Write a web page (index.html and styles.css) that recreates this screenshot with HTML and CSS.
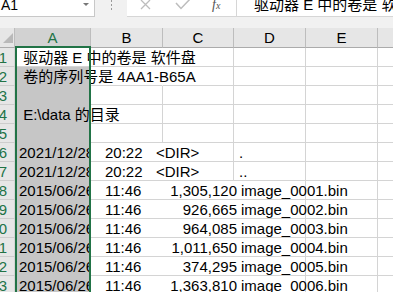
FILE: index.html
```html
<!DOCTYPE html>
<html lang="zh-CN">
<head>
  <meta charset="UTF-8" />
  <meta name="viewport" content="width=device-width, initial-scale=1.0"/>
  <title>目录列表</title>
  <link rel="stylesheet" href="styles.css">
</head>
<body>
  <!-- 名称框 + 编辑栏 -->
  <div class="topbar">
    <div class="namebox">
      <span class="ref">A1</span>
      <span class="drop"></span>
    </div>
    <div class="grip">
      <svg width="3" height="12" viewBox="0 0 3 12"><rect x="1" y="0" width="1" height="2" fill="#9a9a9a"/><rect x="1" y="4" width="1" height="2" fill="#9a9a9a"/><rect x="1" y="8" width="1" height="2" fill="#9a9a9a"/></svg>
    </div>
    <div class="fbar">
      <div class="btns">
        <svg class="ic-x" width="11" height="10" viewBox="0 0 11 10"><path d="M1 0 L10 9 M10 0 L1 9" stroke="#bdbdbd" stroke-width="1.3" fill="none"/></svg>
        <svg class="ic-ok" width="17" height="11" viewBox="0 0 17 11"><path d="M1 4 L6 9.5 L16 -1" stroke="#bdbdbd" stroke-width="1.5" fill="none"/></svg>
        <span class="fx">f<small>x</small></span>
      </div>
      <div class="ftext">驱动器 E 中的卷是 软件盘</div>
    </div>
  </div>
  <div class="band"></div>

  <div class="sheet">
    <div class="row head">
      <div class="c rh corner">
        <svg width="10" height="10" viewBox="0 0 10 10"><path d="M10 0 L10 10 L0 10 Z" fill="#b9b9b9"/></svg>
      </div>
      <div class="c ca on">A</div>
      <div class="c cb">B</div>
      <div class="c cc">C</div>
      <div class="c cd">D</div>
      <div class="c ce">E</div>
      <div class="c cf"></div>
    </div>

    <div class="row">
      <div class="c rh"><span>1</span></div>
      <div class="c ca"> 驱动器 E 中的卷是 软件盘</div>
      <div class="c cb ov"></div><div class="c cc"></div><div class="c cd"></div><div class="c ce"></div><div class="c cf"></div>
    </div>
    <div class="row">
      <div class="c rh"><span>2</span></div>
      <div class="c ca sel"> 卷的序列号是 4AA1-B65A</div>
      <div class="c cb ov"></div><div class="c cc"></div><div class="c cd"></div><div class="c ce"></div><div class="c cf"></div>
    </div>
    <div class="row">
      <div class="c rh"><span>3</span></div>
      <div class="c ca sel"></div>
      <div class="c cb"></div><div class="c cc"></div><div class="c cd"></div><div class="c ce"></div><div class="c cf"></div>
    </div>
    <div class="row">
      <div class="c rh"><span>4</span></div>
      <div class="c ca sel"> E:\data 的目录</div>
      <div class="c cb"></div><div class="c cc"></div><div class="c cd"></div><div class="c ce"></div><div class="c cf"></div>
    </div>
    <div class="row">
      <div class="c rh"><span>5</span></div>
      <div class="c ca sel"></div>
      <div class="c cb"></div><div class="c cc"></div><div class="c cd"></div><div class="c ce"></div><div class="c cf"></div>
    </div>

    <div class="row">
      <div class="c rh"><span>6</span></div>
      <div class="c ca sel clip">2021/12/28</div>
      <div class="c span2"><span class="tm">20:22</span><span class="sz dir">&lt;DIR&gt;</span><span class="nm dot">.</span></div>
      <div class="c cd"></div><div class="c ce"></div><div class="c cf"></div>
    </div>
    <div class="row">
      <div class="c rh"><span>7</span></div>
      <div class="c ca sel clip">2021/12/28</div>
      <div class="c span2"><span class="tm">20:22</span><span class="sz dir">&lt;DIR&gt;</span><span class="nm dot">..</span></div>
      <div class="c cd"></div><div class="c ce"></div><div class="c cf"></div>
    </div>
    <div class="row">
      <div class="c rh"><span>8</span></div>
      <div class="c ca sel clip">2015/06/26</div>
      <div class="c span3"><span class="tm">11:46</span><span class="sz">1,305,120</span><span class="nm">image_0001.bin</span></div>
      <div class="c ce"></div><div class="c cf"></div>
    </div>
    <div class="row">
      <div class="c rh"><span>9</span></div>
      <div class="c ca sel clip">2015/06/26</div>
      <div class="c span3"><span class="tm">11:46</span><span class="sz">926,665</span><span class="nm">image_0002.bin</span></div>
      <div class="c ce"></div><div class="c cf"></div>
    </div>
    <div class="row">
      <div class="c rh"><span>10</span></div>
      <div class="c ca sel clip">2015/06/26</div>
      <div class="c span3"><span class="tm">11:46</span><span class="sz">964,085</span><span class="nm">image_0003.bin</span></div>
      <div class="c ce"></div><div class="c cf"></div>
    </div>
    <div class="row">
      <div class="c rh"><span>11</span></div>
      <div class="c ca sel clip">2015/06/26</div>
      <div class="c span3"><span class="tm">11:46</span><span class="sz">1,011,650</span><span class="nm">image_0004.bin</span></div>
      <div class="c ce"></div><div class="c cf"></div>
    </div>
    <div class="row">
      <div class="c rh"><span>12</span></div>
      <div class="c ca sel clip">2015/06/26</div>
      <div class="c span3"><span class="tm">11:46</span><span class="sz">374,295</span><span class="nm">image_0005.bin</span></div>
      <div class="c ce"></div><div class="c cf"></div>
    </div>
    <div class="row">
      <div class="c rh"><span>13</span></div>
      <div class="c ca sel clip">2015/06/26</div>
      <div class="c span3"><span class="tm">11:46</span><span class="sz">1,363,810</span><span class="nm">image_0006.bin</span></div>
      <div class="c ce"></div><div class="c cf"></div>
    </div>

    <!-- A 列选区边框 -->
    <div class="selection"></div>
  </div>
</body>
</html>
```

FILE: styles.css
```css
/* 页面 */
body {
  margin: 0;
  width: 393px;
  height: 292px;
  overflow: hidden;
  background: #fff;
  color: #000;
  font-family: "Liberation Sans", "Noto Sans CJK SC", sans-serif;
  font-size: 15px;
}

/* 名称框 / 编辑栏 */
.topbar {
  display: flex;
  height: 17px;
  background: #f1f1f1;
}

.namebox {
  flex: none;
  width: 95px;
  box-sizing: border-box;
  background: #fff;
  border-right: 1px solid #c8c8c8;
  border-bottom: 1px solid #c8c8c8;
  display: flex;
  justify-content: space-between;
  align-items: flex-start;
  padding: 0 5px 0 1px;
}

.namebox .ref {
  font-size: 14px;
  line-height: 12px;
  margin-top: -1px;
}

.drop {
  margin-top: 3px;
  border-left: 3.5px solid transparent;
  border-right: 3.5px solid transparent;
  border-top: 3px solid #777;
}

.grip {
  flex: none;
  width: 32px;
  display: flex;
  justify-content: center;
}

.fbar {
  flex: 1;
  min-width: 0;
  display: flex;
  background: #fff;
  border-bottom: 1px solid #d6d6d6;
}

.btns {
  width: 109px;
  flex: none;
  display: flex;
  align-items: flex-start;
  border-right: 1px solid #d6d6d6;
}

.ic-x { margin-left: 13px; }
.ic-ok { margin-left: 24px; margin-top: -1px; }

.fx {
  margin-left: 20px;
  margin-top: -3px;
  font-family: "Liberation Serif", serif;
  font-style: italic;
  font-size: 14px;
  color: #555;
}

.fx small { font-size: 10px; }

.ftext {
  flex: 1;
  min-width: 0;
  padding-left: 17px;
  white-space: nowrap;
  overflow: hidden;
  line-height: 12px;
  margin-top: -1px;
}

.band {
  height: 11px;
  background: #f1f1f1;
}

/* 表格 */
.sheet {
  position: relative;
}

.row {
  display: flex;
  height: 19px;
}

.c {
  flex: none;
  box-sizing: border-box;
  height: 19px;
  border-right: 1px solid #d4d4d4;
  border-bottom: 1px solid #d4d4d4;
  padding: 3px 0 0 2px;
  line-height: 14px;
  white-space: pre;
}

.rh { width: 15px; }
.ca { width: 76px; padding-left: 4px; }
.cb { width: 72px; }
.cc { width: 71px; }
.cd { width: 72px; }
.ce { width: 72px; }
.cf { width: 30px; }

/* 文字跨列显示的单元格 */
.span2 { width: 143px; }
.span3 { width: 215px; }

/* 文字溢出的单元格不画右边网格线 */
.ov { border-right-color: transparent; }

.clip { overflow: hidden; }

.sel { background: #c6c6c6; border-bottom-color: #c6c6c6; }

/* 行号 */
.rh {
  background: #e6e6e6;
  border-bottom-color: #cdcdcd;
  color: #217346;
  display: flex;
  justify-content: flex-end;
  overflow: hidden;
  padding: 3px 7px 0 0;
}

/* 列标题 */
.head {
  height: 20px;
}

.head .c {
  height: 20px;
  background: #e6e6e6;
  border-right-color: #bdbdbd;
  border-bottom-color: #ababab;
  text-align: center;
  padding: 1px 0 0;
  line-height: 18px;
}

.head .on {
  background: #d2d2d2;
  color: #217346;
}

.head .corner {
  display: flex;
  justify-content: flex-end;
  align-items: flex-end;
  padding: 0 1px 4px 0;
}

/* 时间、大小、文件名 */
.tm {
  display: inline-block;
  width: 51px;
  margin-left: 12px;
}

.sz {
  display: inline-block;
  width: 81px;
  text-align: right;
}

.sz.dir { text-align: left; }

.nm { margin-left: 4px; }
.nm.dot { margin-left: 2px; }

/* 选区边框 */
.selection {
  position: absolute;
  top: 18px;
  left: 15px;
  width: 76px;
  height: 300px;
  box-sizing: border-box;
  border: 2px solid #217346;
  pointer-events: none;
}
```
